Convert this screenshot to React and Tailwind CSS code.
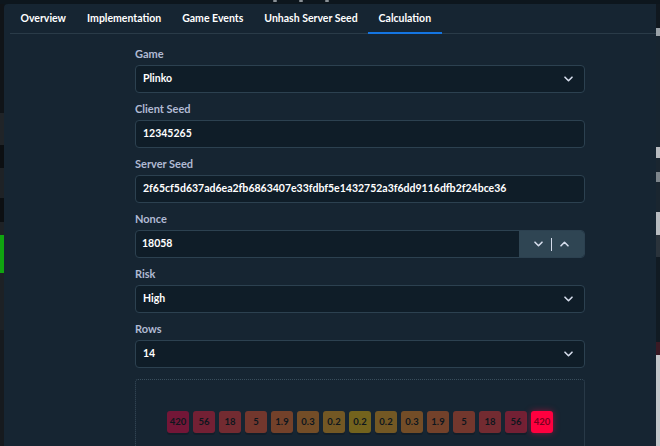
import React from "react";

const Chevron = ({ up = false }) => (
  <svg width="9" height="6" viewBox="0 0 9 6" fill="none" className={up ? "rotate-180" : ""}>
    <path d="M1 1.2l3.5 3.5 3.5-3.5" stroke="#d5dceb" strokeWidth="1.6" strokeLinecap="round" strokeLinejoin="round" />
  </svg>
);

const Label = ({ children }) => (
  <div className="text-[11px] leading-[14px] font-bold text-[#b1bad3] mb-[4px]">{children}</div>
);

const Select = ({ value }) => (
  <div className="h-[28px] shrink-0 rounded-[4px] border border-[#2c4150] bg-[#0f1d28] flex items-center justify-between pl-[7px] pr-[11px]">
    <span className="text-[10.5px] font-bold text-white">{value}</span>
    <Chevron />
  </div>
);

const Input = ({ value }) => (
  <div className="h-[28px] shrink-0 rounded-[4px] border border-[#2c4150] bg-[#0f1d28] flex items-center pl-[7px]">
    <span className="text-[10.5px] font-bold text-white">{value}</span>
  </div>
);

const buckets = [
  ["420", "bg-[#ff003f]"],
  ["56", "bg-[#ff1b37]"],
  ["18", "bg-[#ff3630]"],
  ["5", "bg-[#ff5228]"],
  ["1.9", "bg-[#ff6d20]"],
  ["0.3", "bg-[#ff8919]"],
  ["0.2", "bg-[#ffa411]"],
  ["0.2", "bg-[#ffc000]"],
  ["0.2", "bg-[#ffa411]"],
  ["0.3", "bg-[#ff8919]"],
  ["1.9", "bg-[#ff6d20]"],
  ["5", "bg-[#ff5228]"],
  ["18", "bg-[#ff3630]"],
  ["56", "bg-[#ff1b37]"],
];

export default function App() {
  return (
    <div
      className="w-[660px] h-[446px] overflow-hidden bg-[#0d161d] flex flex-col"
      style={{ fontFamily: "Lato, 'Noto Sans', sans-serif" }}
    >
      <div className="h-[4px] flex shrink-0">
        <div className="w-[273px]" />
        <div className="w-[4px] h-[2px] rounded-full bg-[#8a9196]" />
        <div className="w-[22px]" />
        <div className="w-[4px] h-[2px] rounded-full bg-[#8a9196]" />
        <div className="w-[22px]" />
        <div className="w-[4px] h-[2px] rounded-full bg-[#8a9196]" />
      </div>
      <div className="flex flex-1 min-h-0">
        <div className="w-[4px] flex flex-col shrink-0">
          <div className="h-[109px] shrink-0 bg-[#101418]" />
          <div className="h-[32px] shrink-0 bg-[#202428]" />
          <div className="h-[23px] shrink-0 bg-[#0c0f12]" />
          <div className="h-[30px] shrink-0 bg-[#1e2226]" />
          <div className="h-[24px] shrink-0 bg-[#0c0f12]" />
          <div className="h-[13px] shrink-0 bg-[#1e2226]" />
          <div className="h-[38px] shrink-0 bg-[#10a410]" />
          <div className="h-[57px] shrink-0 bg-[#1d2125]" />
          <div className="flex-1 bg-[#161a1e]" />
        </div>
        <div className="flex-1 bg-[#162532] rounded-tl-[4px] overflow-hidden">
          <div className="ml-[6px] h-[30px] border-b border-[#2a3b48] flex items-stretch">
            {["Overview", "Implementation", "Game Events", "Unhash Server Seed"].map((t) => (
              <div key={t} className="px-[10.5px] flex items-center text-[10.5px] font-bold text-white">
                {t}
              </div>
            ))}
            <div className="px-[10.5px] flex items-center text-[10.5px] font-bold text-white border-b-2 border-[#1475e1] -mb-[1px] pt-[1px]">
              Calculation
            </div>
          </div>
          <div className="ml-[131px] w-[450px] pt-[13px] flex flex-col">
            <Label>Game</Label>
            <Select value="Plinko" />
            <div className="h-[9px] shrink-0" />
            <Label>Client Seed</Label>
            <Input value="12345265" />
            <div className="h-[9px] shrink-0" />
            <Label>Server Seed</Label>
            <Input value="2f65cf5d637ad6ea2fb6863407e33fdbf5e1432752a3f6dd9116dfb2f24bce36" />
            <div className="h-[9px] shrink-0" />
            <Label>Nonce</Label>
            <div className="h-[28px] shrink-0 rounded-[4px] border border-[#2c4150] bg-[#0f1d28] flex items-stretch overflow-hidden">
              <div className="flex-1 flex items-center pl-[6px]">
                <span className="text-[10.5px] font-bold text-white">18058</span>
              </div>
              <div className="w-[65px] bg-[#2f4553] flex items-center justify-center gap-[8px]">
                <Chevron />
                <div className="w-[1.5px] h-[13px] bg-[#d5dceb]" />
                <Chevron up />
              </div>
            </div>
            <div className="h-[9px] shrink-0" />
            <Label>Risk</Label>
            <Select value="High" />
            <div className="h-[9px] shrink-0" />
            <Label>Rows</Label>
            <Select value="14" />
            <div className="mt-[11px] h-[90px] shrink-0 border border-dotted border-[#3a4e5c] rounded-[3px] flex justify-center pt-[31px]">
              <div className="flex gap-[4px] h-[22px]">
                {buckets.map(([v, c], i) => (
                  <div
                    key={i}
                    className={`w-[22px] h-[22px] rounded-[3px] ${c} opacity-40 flex items-center justify-center text-[9.5px] font-bold text-black shadow-[0_2px_0_rgba(0,0,0,0.4)]`}
                  >
                    {v}
                  </div>
                ))}
                <div className="w-[22px] h-[22px] rounded-[3px] bg-[#ff003f] flex items-center justify-center text-[9.5px] font-bold text-[#7a0020] shadow-[0_0_6px_rgba(255,0,63,0.5)]">
                  420
                </div>
              </div>
            </div>
          </div>
        </div>
        <div className="w-[4px] flex flex-col shrink-0">
          <div className="h-[24px] shrink-0 bg-[#10181f]" />
          <div className="h-[8px] shrink-0 bg-[#9aa2a8]" />
          <div className="h-[111px] shrink-0 bg-[#172530]" />
          <div className="h-[11px] shrink-0 bg-[#b8bcc0]" />
          <div className="h-[14px] shrink-0 bg-[#1a2630]" />
          <div className="h-[10px] shrink-0 bg-[#7d858b]" />
          <div className="h-[30px] shrink-0 bg-[#1a2630]" />
          <div className="h-[23px] shrink-0 bg-[#b8bcc0]" />
          <div className="h-[22px] shrink-0 bg-[#2a333b]" />
          <div className="h-[85px] shrink-0 bg-[#111b23]" />
          <div className="h-[13px] shrink-0 bg-[#3a1a24]" />
          <div className="flex-1 bg-[#c4c7ca]" />
        </div>
      </div>
    </div>
  );
}
